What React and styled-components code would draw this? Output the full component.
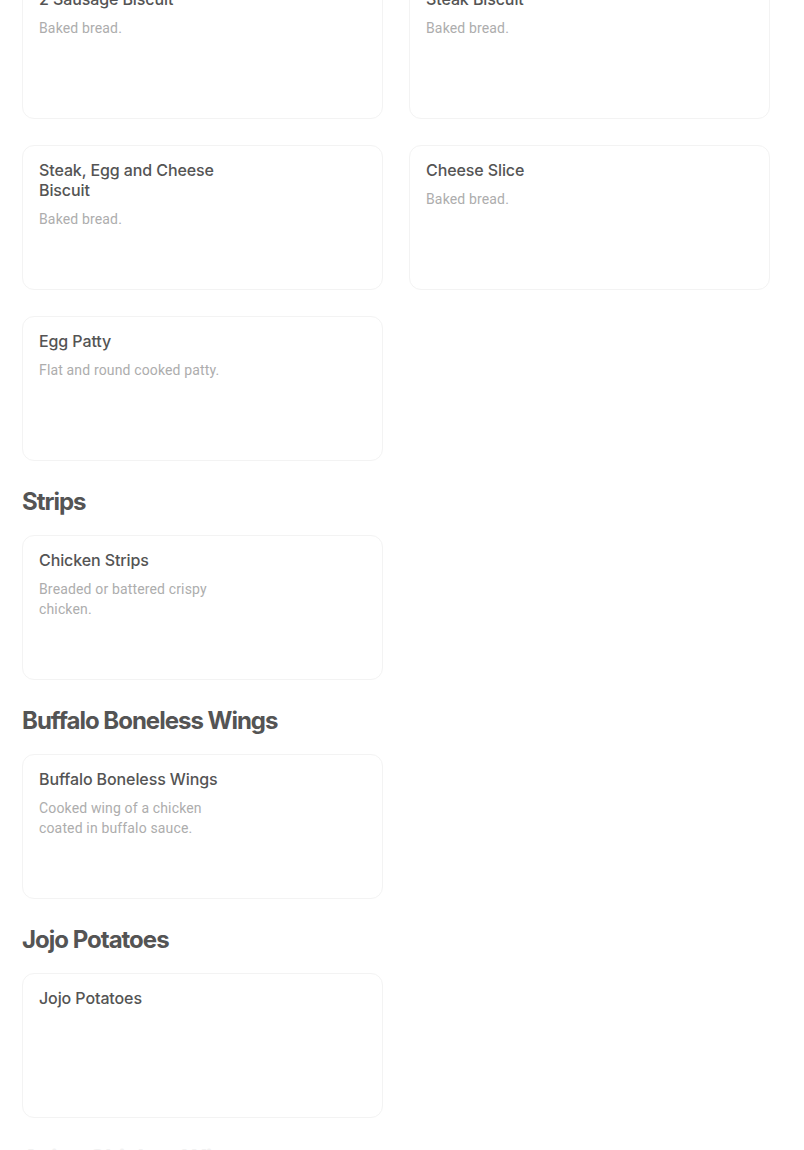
import React from "react";
import styled, { createGlobalStyle } from "styled-components";

const Global = createGlobalStyle`
  html, body { margin: 0; padding: 0; background: #ffffff; }
  body { font-family: "Inter", "Roboto", sans-serif; overflow: hidden; }
`;

const Page = styled.main`
  margin-top: -26px;
  padding: 0 34px 0 22px;
  display: flex;
  flex-direction: column;
`;

const Section = styled.section`
  display: flex;
  flex-direction: column;
`;

const Heading = styled.h2`
  margin: 25px 0 17px;
  font-family: "Inter", sans-serif;
  font-size: 24px;
  line-height: 32px;
  height: 32px;
  font-weight: 700;
  letter-spacing: -1px;
  color: ${(p) => (p.$faded ? "#f2f2f2" : "#545454")};
`;

const Grid = styled.div`
  display: grid;
  grid-template-columns: 361px 361px;
  column-gap: 26px;
  row-gap: 26px;
`;

const Card = styled.article`
  box-sizing: border-box;
  height: 145px;
  border: 1px solid #f3f3f3;
  border-radius: 12px;
  background: #ffffff;
  padding: 14px 16px;
  display: flex;
`;

const TextCol = styled.div`
  width: 198px;
  display: flex;
  flex-direction: column;
  gap: 9px;
`;

const Title = styled.div`
  font-family: "Inter", sans-serif;
  font-size: 16px;
  line-height: 20px;
  font-weight: 500;
  color: #545454;
  letter-spacing: -0.1px;
`;

const Desc = styled.div`
  font-family: "Roboto", sans-serif;
  font-size: 14px;
  line-height: 20px;
  font-weight: 400;
  color: #adadad;
  letter-spacing: 0.15px;
`;

const sections = [
  {
    name: null,
    items: [
      { t: "2 Sausage Biscuit", d: "Baked bread." },
      { t: "Steak Biscuit", d: "Baked bread." },
      { t: "Steak, Egg and Cheese Biscuit", d: "Baked bread." },
      { t: "Cheese Slice", d: "Baked bread." },
      { t: "Egg Patty", d: "Flat and round cooked patty." },
    ],
  },
  {
    name: "Strips",
    items: [{ t: "Chicken Strips", d: "Breaded or battered crispy chicken." }],
  },
  {
    name: "Buffalo Boneless Wings",
    items: [
      {
        t: "Buffalo Boneless Wings",
        d: "Cooked wing of a chicken coated in buffalo sauce.",
      },
    ],
  },
  {
    name: "Jojo Potatoes",
    items: [{ t: "Jojo Potatoes", d: null }],
  },
];

export default function App() {
  return (
    <>
      <Global />
      <Page>
        {sections.map((s, i) => (
          <Section key={i}>
            {s.name && <Heading>{s.name}</Heading>}
            <Grid>
              {s.items.map((it) => (
                <Card key={it.t}>
                  <TextCol>
                    <Title>{it.t}</Title>
                    {it.d && <Desc>{it.d}</Desc>}
                  </TextCol>
                </Card>
              ))}
            </Grid>
          </Section>
        ))}
        <Section>
          <Heading $faded>Asian Chicken Wings</Heading>
        </Section>
      </Page>
    </>
  );
}
